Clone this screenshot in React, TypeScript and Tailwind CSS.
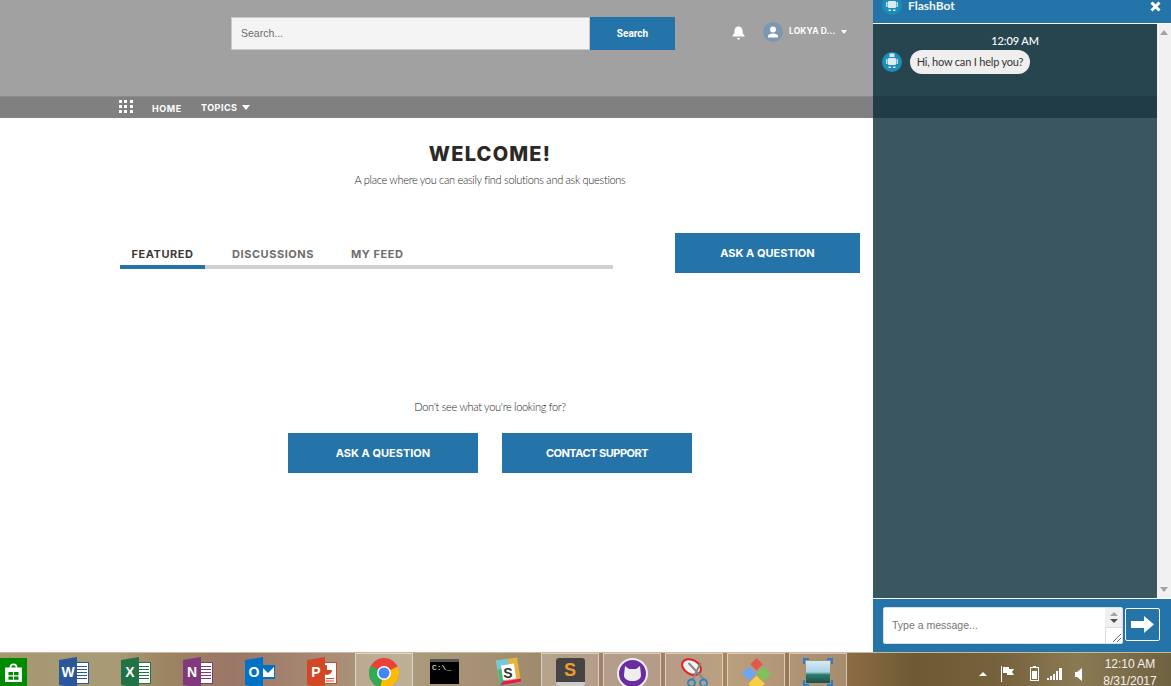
import React from "react";

const Bot = ({ size = 20 }: { size?: number }) => (
  <svg width={size} height={size} viewBox="0 0 20 20" className="shrink-0">
    <circle cx="10" cy="10" r="10" fill="#1b8fb8" />
    <rect x="7.500" y="1.500" width="5" height="3.500" rx="0.500" fill="#dfeaf0" />
    <rect x="6" y="6" width="8" height="7" rx="1" fill="#dfeaf0" />
    <rect x="4" y="7" width="1.500" height="5" fill="#c5dbe5" />
    <rect x="14.500" y="7" width="1.500" height="5" fill="#c5dbe5" />
    <rect x="6.500" y="14.500" width="2.500" height="1.500" fill="#dfeaf0" />
    <rect x="11" y="14.500" width="2.500" height="1.500" fill="#dfeaf0" />
  </svg>
);

const Slot = ({ active, children }: { active?: boolean; children: React.ReactNode }) => (
  <div className="w-[62px] h-[34px] shrink-0 px-[2px]">
    <div
      className={
        "h-full flex justify-center pt-[4px] overflow-hidden " +
        (active ? "bg-[#ffffff38] border border-[#ffffff80] border-b-0" : "")
      }
    >
      {children}
    </div>
  </div>
);

const Office = ({ color, letter, side }: { color: string; letter: string; side?: React.ReactNode }) => (
  <svg width="30" height="31" viewBox="0 0 30 31">
    {side ?? (
      <g>
        <rect x="14" y="5.500" width="15.500" height="21" fill="#fff" stroke={color} />
        <path d="M17 9.500h11M17 12.500h11M17 15.500h11M17 18.500h11M17 21.500h11" stroke={color} />
      </g>
    )}
    <path d="M0 3 L18 0 V31 L0 28 Z" fill={color} />
    <text x="9" y="20" textAnchor="middle" fontSize="14" fontWeight="700" fill="#fff" fontFamily="Liberation Sans, sans-serif">
      {letter}
    </text>
  </svg>
);

const primary =
  "h-[40px] bg-[#2574a9] flex items-center justify-center text-white text-[11px] font-bold font-['Inter',sans-serif]";

export default function App() {
  return (
    <div className="w-[1171px] h-[686px] overflow-hidden flex flex-col font-['Lato',sans-serif] bg-white">
      <div className="flex h-[652px] shrink-0">
        {/* Left page */}
        <div className="w-[873px] shrink-0 flex flex-col bg-white">
          <div className="h-[96px] bg-[#a1a1a1] flex items-start pt-[17px] pl-[231px]">
            <div className="w-[359px] h-[33px] bg-[#f4f4f4] border border-[#c9c9c9] flex items-center pl-[9px] text-[10.500px] text-[#6b6b6b] font-['Liberation_Sans',sans-serif]">
              Search...
            </div>
            <div className="w-[85px] h-[33px] bg-[#2574a9] flex items-center justify-center text-[10px] font-bold text-white font-['Roboto',sans-serif]">
              Search
            </div>
            <svg width="13" height="14" viewBox="0 0 13 14" className="ml-[57px] mt-[9px]" fill="#fff">
              <path d="M6.500 0.500c-2.600 0-4 2-4 4.300 0 2.700-1 3.700-2 4.700v1h12v-1c-1-1-2-2-2-4.700 0-2.300-1.400-4.300-4-4.300z" />
              <path d="M5 12h3c0 1-.7 1.500-1.500 1.500S5 13 5 12z" />
            </svg>
            <div className="ml-[18px] mt-[5px] w-[20px] h-[20px] rounded-full bg-[#7b97b2] flex items-center justify-center">
              <svg width="12" height="12" viewBox="0 0 12 12" fill="#fff">
                <circle cx="6" cy="3.500" r="3" />
                <path d="M1 11.500v-1.500c0-1.500 2-2.500 5-2.500s5 1 5 2.500v1.500z" />
              </svg>
            </div>
            <div className="ml-[6px] mt-[9px] text-[8.500px] leading-[11px] font-bold tracking-[0.1px] text-white font-['Inter',sans-serif]">LOKYA D...</div>
            <div className="ml-[6px] mt-[13px] w-0 h-0 border-l-[3.500px] border-r-[3.500px] border-t-[4px] border-l-transparent border-r-transparent border-t-white" />
          </div>
          <div className="h-[22px] bg-[#808080] border-t border-t-[#8d8d8d] flex items-start pl-[119px] text-white font-['Inter',sans-serif] font-bold text-[9px]">
            <div className="grid grid-cols-3 gap-[2px] mt-[3px] w-[14px]">
              {Array.from({ length: 9 }).map((_, i) => (
                <div key={i} className="w-[3px] h-[3px] bg-white" />
              ))}
            </div>
            <div className="ml-[19px] mt-[6px] leading-[11px] tracking-[0.6px]">HOME</div>
            <div className="ml-[19px] mt-[5px] leading-[11px] tracking-[0.5px]">TOPICS</div>
            <div className="ml-[4px] mt-[8px] w-0 h-0 border-l-[4px] border-r-[4px] border-t-[5px] border-l-transparent border-r-transparent border-t-white" />
          </div>

          <div className="flex-1 flex flex-col">
            <div className="pl-[107px] flex flex-col items-center">
              <div className="mt-[23px] text-[20px] leading-[26px] font-extrabold tracking-[1.200px] text-[#2b2826] font-['Inter',sans-serif]">WELCOME!</div>
              <div className="mt-[6px] text-[11px] leading-[14px] font-light tracking-[-0.3px] text-[#222]">A place where you can easily find solutions and ask questions</div>
            </div>

            <div className="flex mt-[46px] pl-[120px] items-start h-[40px]">
              <div className="w-[493px] mt-[6px] h-[30px] flex border-b-[4px] border-b-[#d0d0d0] text-[11px] font-bold tracking-[0.55px] font-['Inter',sans-serif] text-[#6d6d6d]">
                <div className="w-[85px] h-[30px] flex items-start justify-center pt-[3px] leading-[24px] border-b-[4px] border-b-[#2574a9] text-[#3c3a38]">FEATURED</div>
                <div className="ml-[27px] pt-[3px] leading-[24px]">DISCUSSIONS</div>
                <div className="ml-[37px] pt-[3px] leading-[24px]">MY FEED</div>
              </div>
              <div className={"ml-[62px] w-[185px] " + primary}>ASK A QUESTION</div>
            </div>

            <div className="pl-[107px] flex flex-col items-center">
              <div className="mt-[127px] text-[11px] leading-[14px] font-light tracking-[-0.3px] text-[#222]">Don't see what you're looking for?</div>
              <div className="mt-[19px] flex gap-[24px]">
                <div className={"w-[190px] " + primary}>ASK A QUESTION</div>
                <div className={"w-[190px] tracking-[-0.5px] " + primary}>CONTACT SUPPORT</div>
              </div>
            </div>
          </div>
        </div>

        {/* Chat panel */}
        <div className="w-[298px] shrink-0 flex flex-col">
          <div className="h-[23px] bg-[#2574a9] flex items-start pl-[9px] overflow-hidden">
            <div className="-mt-[5px]"><Bot /></div>
            <div className="ml-[6px] text-[12px] leading-[11px] font-bold text-[#f2f6f9]">FlashBot</div>
            <svg width="11" height="11" viewBox="0 0 11 11" className="ml-auto mr-[10px] mt-[1px]">
              <path d="M1.500 1.500 L9.500 9.500 M9.500 1.500 L1.500 9.500" stroke="#fff" strokeWidth="3" />
            </svg>
          </div>
          <div className="h-px bg-white" />
          <div className="h-[574px] flex">
            <div className="w-[284px] flex flex-col">
              <div className="h-[72px] bg-[#27454f] flex flex-col">
                <div className="mt-[10px] text-center text-[11px] leading-[14px] font-medium tracking-[-0.1px] text-white">12:09 AM</div>
                <div className="mt-[2px] flex items-start pl-[9px]">
                  <div className="mt-[2px]"><Bot /></div>
                  <div className="ml-[8px] h-[24px] w-[120px] rounded-[12px] bg-[#efefef] flex items-center justify-center whitespace-nowrap text-[11px] tracking-[-0.2px] text-[#333]">Hi, how can I help you?</div>
                </div>
              </div>
              <div className="h-[22px] bg-[#203c47]" />
              <div className="flex-1 bg-[#3a5660]" />
            </div>
            <div className="w-[14px] bg-[#f1f1f1] flex flex-col items-center justify-between py-[6px]">
              <div className="w-0 h-0 border-l-[4px] border-r-[4px] border-b-[5px] border-l-transparent border-r-transparent border-b-[#a3a3a3]" />
              <div className="w-0 h-0 border-l-[4px] border-r-[4px] border-t-[5px] border-l-transparent border-r-transparent border-t-[#a3a3a3]" />
            </div>
          </div>
          <div className="h-px bg-white" />
          <div className="flex-1 bg-[#2574a9] flex items-start pl-[10px] pt-[8px]">
            <div className="w-[240px] h-[37px] bg-white border border-[#d7dfe6] rounded-[2px] flex overflow-hidden">
              <div className="flex-1 flex items-center pl-[8px] text-[10.500px] text-[#757575] font-['Liberation_Sans',sans-serif]">Type a message...</div>
              <div className="w-[17px] flex flex-col">
                <div className="h-[19px] bg-[#f0f0f0] flex flex-col items-center justify-center gap-[3px]">
                  <div className="w-0 h-0 border-l-[4px] border-r-[4px] border-b-[4px] border-l-transparent border-r-transparent border-b-[#a3a3a3]" />
                  <div className="w-0 h-0 border-l-[4px] border-r-[4px] border-t-[4px] border-l-transparent border-r-transparent border-t-[#505050]" />
                </div>
                <div className="flex-1 bg-white border-t border-l border-[#dcdcdc] flex items-end justify-end">
                  <svg width="10" height="10" viewBox="0 0 10 10" stroke="#666" strokeWidth="1">
                    <path d="M1 9 L9 1 M5 9 L9 5" />
                  </svg>
                </div>
              </div>
            </div>
            <div className="ml-[2px] w-[35px] h-[33px] mt-[1px] border border-white rounded-[2px] bg-[#2574a9] flex items-center justify-center">
              <svg width="23" height="17" viewBox="0 0 23 17" fill="#fff">
                <path d="M0 5h13V0l10 8.500-10 8.500v-5H0z" />
              </svg>
            </div>
          </div>
        </div>
      </div>

      {/* Taskbar */}
      <div className="h-[34px] flex items-start border-t border-t-[#c9b89a] bg-[linear-gradient(90deg,#a69772_0%,#a89a74_10%,#9c8562_14%,#9a7666_20%,#a88c74_28%,#ab9a7c_35%,#a08a6c_46%,#9f7f6a_55%,#a8855c_62%,#8f6d45_72%,#6d5a34_78%,#75613c_85%,#8a7a54_92%,#6f6240_100%)] overflow-hidden">
        <div className="w-[43px] h-[34px] shrink-0 pt-[5px]">
          <div className="w-[27px] h-[29px] bg-[#008a00] flex items-start justify-center pt-[5px]">
            <svg width="17" height="19" viewBox="0 0 15 17" fill="#fff">
              <path d="M4 4a3.500 3.500 0 0 1 7 0h4v13H0V4zM5.500 4h4a2 2 0 0 0-4 0z" fillRule="evenodd" />
              <path d="M3 8h4v3H3zM8 8h4v3H8zM3 12h4v3H3zM8 12h4v3H8z" fill="#008a00" />
            </svg>
          </div>
        </div>
        <Slot><Office color="#2b579a" letter="W" /></Slot>
        <Slot><Office color="#217346" letter="X" /></Slot>
        <Slot><Office color="#80397b" letter="N" /></Slot>
        <Slot>
          <Office
            color="#0072c6"
            letter="O"
            side={
              <g>
                <rect x="15" y="8" width="15" height="14" fill="#0072c6" />
                <path d="M17 10 L23 16 L29 10 V20 H17 Z" fill="#fff" />
              </g>
            }
          />
        </Slot>
        <Slot>
          <Office
            color="#d24726"
            letter="P"
            side={
              <g>
                <rect x="14" y="5.500" width="15.500" height="21" fill="#fff" stroke="#d24726" />
                <path d="M20 8 a5 5 0 1 0 5 5 h-5z" fill="#d24726" />
                <path d="M19 21.500h8M19 24h8" stroke="#d24726" />
              </g>
            }
          />
        </Slot>
        <Slot active>
          <svg width="30" height="30" viewBox="0 0 30 30">
            <circle cx="15" cy="15" r="15" fill="#ea4335" />
            <path d="M15 15 L2 7.500 A15 15 0 0 0 11 29.500 Z" fill="#34a853" />
            <path d="M15 15 L28.500 8.500 A15 15 0 0 1 11 29.500 Z" fill="#fbbc05" />
            <circle cx="15" cy="15" r="7" fill="#fff" />
            <circle cx="15" cy="15" r="5.500" fill="#4285f4" />
          </svg>
        </Slot>
        <Slot>
          <div className="w-[29px] h-[25px] bg-black border-t-[3px] border-t-[#555] text-white text-[8px] leading-[12px] font-['Liberation_Mono',monospace] pl-[2px] mt-[2px] mr-[3px]">C:\_</div>
        </Slot>
        <Slot>
          <svg width="26" height="29" viewBox="0 0 26 28">
            <path d="M1 3 L22 0 L26 24 L5 28 Z" fill="#e8b33a" />
            <path d="M1 3 L13 1.500 L14 10 L2.500 12 Z" fill="#6ecadc" />
            <path d="M3 12 L8 11 L10 26 L5 28 Z" fill="#3eb890" />
            <path d="M8 24 L26 21 L26 24 L5 28 Z" fill="#e01765" />
            <rect x="7" y="7" width="13" height="15" fill="#fff" transform="rotate(-8 13 14)" />
            <text x="13" y="20" textAnchor="middle" fontSize="14" fontWeight="700" fill="#333" fontFamily="Liberation Sans, sans-serif">S</text>
          </svg>
        </Slot>
        <Slot active>
          <div className="w-[29px] h-[28px] rounded-[3px] bg-[#444] border-b-[4px] border-b-[#ccc] flex items-center justify-center text-[#f29a2e] font-bold text-[18px] font-['Liberation_Sans',sans-serif]">S</div>
        </Slot>
        <Slot active>
          <div className="w-[31px] h-[31px] rounded-full bg-[#6a2c9e] border-[2px] border-[#eee] flex items-center justify-center">
            <svg width="17" height="15" viewBox="0 0 17 15" fill="#eee">
              <path d="M1 0 L5 3 H12 L16 0 L17 9 C17 13 13 15 8.500 15 C4 15 0 13 0 9 Z" />
            </svg>
          </div>
        </Slot>
        <Slot active>
          <svg width="29" height="29" viewBox="0 0 28 29">
            <ellipse cx="11" cy="9" rx="10" ry="7" fill="#f2f2f2" stroke="#d22" strokeWidth="2" transform="rotate(30 11 9)" />
            <path d="M8 5 L24 22 M20 5 L12 22" stroke="#888" strokeWidth="2" />
            <circle cx="11" cy="25" r="3.500" fill="none" stroke="#2a86c8" strokeWidth="2" />
            <circle cx="23" cy="25" r="3.500" fill="none" stroke="#2a86c8" strokeWidth="2" />
          </svg>
        </Slot>
        <Slot active>
          <svg width="31" height="30" viewBox="0 0 30 29">
            <path d="M15 0 L21 6 L15 12 L9 6 Z" fill="#e2574c" />
            <path d="M8 8 L15 15 L8 22 L1 15 Z" fill="#6ea5f5" />
            <path d="M22 8 L29 15 L22 22 L15 15 Z" fill="#7cc35c" />
            <path d="M15 17 L23 25 L15 33 L7 25 Z" fill="#f7ce46" />
          </svg>
        </Slot>
        <Slot active>
          <svg width="30" height="28" viewBox="0 0 30 28">
            <defs>
              <linearGradient id="sky" x1="0" y1="0" x2="0" y2="1">
                <stop offset="0" stopColor="#d7ecf5" />
                <stop offset="0.5" stopColor="#a9d3e6" />
                <stop offset="0.62" stopColor="#2e7d6b" />
                <stop offset="1" stopColor="#1e4f4a" />
              </linearGradient>
            </defs>
            <rect x="3" y="3" width="24" height="22" fill="url(#sky)" />
            <path d="M1 6V1h5M24 1h5v5M29 22v5h-5M6 27H1v-5" fill="none" stroke="#2b7fc9" strokeWidth="2" />
          </svg>
        </Slot>

        <div className="ml-auto flex items-start h-full text-[#f4f1ea]">
          <div className="mt-[19px] w-0 h-0 border-l-[4px] border-r-[4px] border-b-[4px] border-l-transparent border-r-transparent border-b-white" />
          <svg width="14" height="16" viewBox="0 0 14 16" className="ml-[13px] mt-[13px]" fill="#fff">
            <path d="M1 0h1v16H1zM3 1h6v2h5l-2 3 2 3H7V7H3z" />
          </svg>
          <svg width="9" height="15" viewBox="0 0 9 15" className="ml-[16px] mt-[13px]" fill="none" stroke="#fff">
            <rect x="0.500" y="1.500" width="8" height="13" />
            <rect x="2" y="5" width="5" height="8" fill="#fff" stroke="none" />
            <path d="M3 0.500h3" />
          </svg>
          <svg width="15" height="12" viewBox="0 0 15 12" className="ml-[8px] mt-[15px]" fill="#fff">
            <path d="M0 10h2v2H0zM3 8h2v4H3zM6 6h2v6H6zM9 3h2v9H9zM12 0h3v12h-3z" />
          </svg>
          <svg width="7" height="13" viewBox="0 0 7 13" className="ml-[13px] mt-[15px]" fill="#fff">
            <path d="M0 4h2l5-4v13l-5-4H0z" />
          </svg>
          <div className="ml-[9px] mr-[2px] w-[78px] text-center text-[12px] leading-[17px] mt-[3px] font-['Liberation_Sans',sans-serif]">
            <div>12:10 AM</div>
            <div>8/31/2017</div>
          </div>
        </div>
      </div>
    </div>
  );
}
